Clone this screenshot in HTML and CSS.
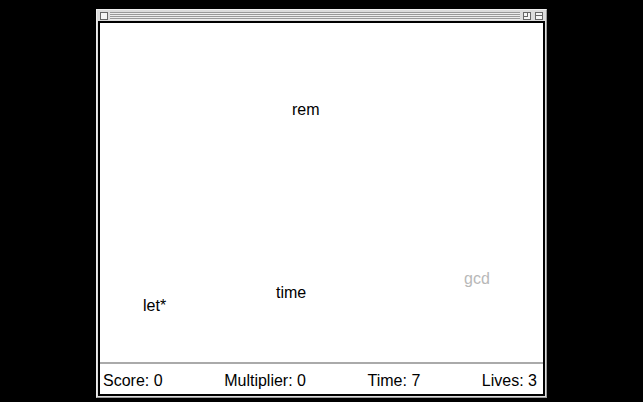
FILE: index.html
```html
<!DOCTYPE html>
<html>
<head>
<title>Word Game</title>
<link rel="stylesheet" href="styles.css">
</head>
<body>
  <div class="window">
    <div class="title-bar">
      <div class="box close-box"></div>
      <div class="stripes"></div>
      <div class="box zoom-box"><span></span></div>
      <div class="box collapse-box"><span></span></div>
    </div>
    <div class="content">
      <div class="playfield">
        <span class="word" style="left: 192px; top: 78px;">rem</span>
        <span class="word" style="left: 176px; top: 261px;">time</span>
        <span class="word" style="left: 43px; top: 274px;">let*</span>
        <span class="word faded" style="left: 364px; top: 247px;">gcd</span>
      </div>
      <div class="status">
        <span>Score: 0</span>
        <span>Multiplier: 0</span>
        <span>Time: 7</span>
        <span>Lives: 3</span>
      </div>
    </div>
  </div>
</body>
</html>
```
FILE: styles.css
```css
body {
  margin: 0;
  background-color: #000;
  font-family: "Liberation Sans", Arial, sans-serif;
  width: 643px;
  height: 402px;
  overflow: hidden;
}

.window {
  margin: 9px 0 0 96px;
  width: 451px;
  height: 389px;
  box-sizing: border-box;
  background-color: #dcdcdc;
  border-left: 1px solid #eee;
  border-top: 1px solid #eee;
  border-right: 1px solid #999;
  border-bottom: 1px solid #999;
  padding: 0 1px 1px 1px;
  display: flex;
  flex-direction: column;
}

/* Title bar with stripes */
.title-bar {
  height: 11px;
  display: flex;
  align-items: center;
  padding: 0 2px 0 2px;
  gap: 2px;
}

.stripes {
  flex: 1;
  height: 8px;
  background: repeating-linear-gradient(to bottom, #9a9a9a 0, #9a9a9a 1px, #eee 1px, #eee 2px);
}

.box {
  width: 6px;
  height: 6px;
  border: 1px solid #666;
  background-color: #f4f4f4;
  position: relative;
}

.zoom-box {
  margin-left: 1px;
}

.zoom-box span {
  position: absolute;
  left: 0;
  top: 0;
  width: 3px;
  height: 3px;
  border-right: 1px solid #666;
  border-bottom: 1px solid #666;
}

.collapse-box {
  margin-left: 2px;
}

.collapse-box span {
  position: absolute;
  left: 0;
  right: 0;
  top: 2px;
  height: 1px;
  background-color: #666;
}

.content {
  flex: 1;
  border: 2px solid #000;
  background-color: #fff;
  display: flex;
  flex-direction: column;
}

.playfield {
  flex: 1;
  position: relative;
}

.word {
  position: absolute;
  font-size: 16px;
  line-height: 18px;
  color: #000;
}

.word.faded {
  color: #b8b8b8;
}

.status {
  height: 27px;
  border-top: 2px solid #aaa;
  display: flex;
  justify-content: space-between;
  align-items: center;
  padding: 3px 6px 0 3px;
  font-size: 16px;
  line-height: 18px;
  color: #000;
}
```
